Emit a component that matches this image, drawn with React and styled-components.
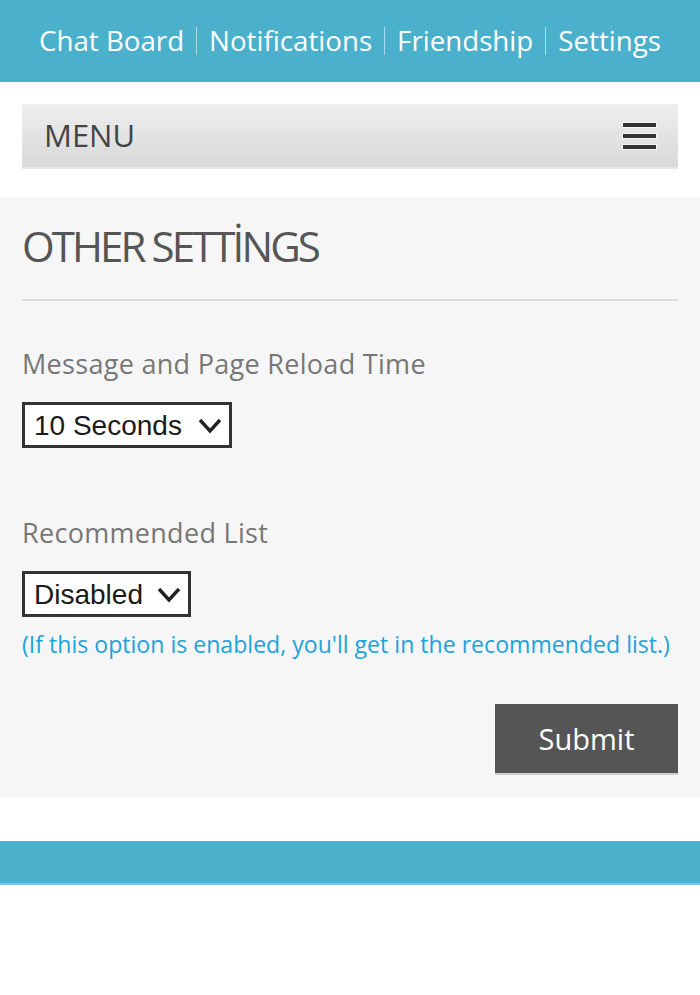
import React from "react";
import styled, { createGlobalStyle } from "styled-components";

const Global = createGlobalStyle`
  html, body { margin: 0; padding: 0; background: #ffffff; }
  body { font-family: "Open Sans", "Noto Sans", sans-serif; }
  * { box-sizing: border-box; }
`;

const TopBar = styled.header`
  height: 82px;
  background: #4bb0cb;
  display: flex;
  align-items: center;
  justify-content: center;
`;

const Nav = styled.nav`
  display: flex;
  align-items: center;
  gap: 12px;
`;

const NavLink = styled.a`
  color: #ffffff;
  font-size: 27.7px;
  letter-spacing: 0;
  text-decoration: none;
  line-height: 1;
`;

const NavSep = styled.span`
  width: 1px;
  height: 28px;
  background: #a9dcea;
`;

const MenuWrap = styled.div`
  padding: 22px 22px 29px;
`;

const MenuBar = styled.div`
  height: 65px;
  background: linear-gradient(#eeeeee, #d9d9d9);
  border-bottom: 2px solid #e9e9e9;
  display: flex;
  align-items: center;
  justify-content: space-between;
  padding: 0 22px;
`;

const MenuLabel = styled.span`
  font-size: 31px;
  color: #444444;
  line-height: 1;
`;

const Burger = styled.div`
  display: flex;
  flex-direction: column;
  gap: 7px;
`;

const BurgerLine = styled.span`
  display: block;
  width: 33px;
  height: 4px;
  background: #333333;
  box-shadow: 0 0 0 1px rgba(255, 255, 255, 0.6);
`;

const Panel = styled.main`
  background: #f6f6f6;
  padding: 22px 22px 22px;
`;

const Title = styled.h1`
  margin: 0;
  padding: 4px 0 31px;
  font-weight: 400;
  font-size: 42px;
  letter-spacing: -2.9px;
  line-height: 44px;
  color: #555555;
  border-bottom: 2px solid #dcdcdc;
`;

const Field = styled.div`
  display: flex;
  flex-direction: column;
  align-items: flex-start;
  margin-top: ${(p) => p.$top}px;
`;

const Label = styled.label`
  font-size: 27px;
  color: #777777;
  line-height: 34px;
  letter-spacing: 0.3px;
`;

const SelectWrap = styled.div`
  position: relative;
  margin-top: 21px;
`;

const Select = styled.select`
  appearance: none;
  -webkit-appearance: none;
  display: block;
  width: ${(p) => p.$w}px;
  height: 46px;
  border: 3px solid #333333;
  border-radius: 0;
  background: #ffffff;
  padding: 0 0 0 9px;
  font-family: "Liberation Sans", Arial, sans-serif;
  font-size: 28px;
  color: #1a1a1a;
  outline: none;
`;

const Chevron = styled.svg`
  position: absolute;
  right: 10px;
  top: 16px;
  pointer-events: none;
`;

const Note = styled.p`
  margin: 12px 0 0;
  font-size: 23.1px;
  line-height: 30px;
  letter-spacing: 0;
  white-space: nowrap;
  color: #1ba3dc;
`;

const Actions = styled.div`
  display: flex;
  justify-content: flex-end;
  margin-top: 45px;
`;

const SubmitButton = styled.button`
  width: 183px;
  height: 71px;
  background: #555555;
  border: none;
  border-bottom: 2px solid #cfcfcf;
  color: #ffffff;
  font-family: "Open Sans", sans-serif;
  font-size: 29px;
  padding: 0;
  cursor: pointer;
`;

const Footer = styled.footer`
  margin-top: 44px;
  height: 44px;
  background: #4bb0cb;
  border-bottom: 2px solid #7cc4d6;
`;

const ChevronIcon = () => (
  <Chevron width="24" height="16" viewBox="0 0 24 16">
    <path d="M2 2 L12 13 L22 2" fill="none" stroke="#222" strokeWidth="3.4" />
  </Chevron>
);

const SelectBox = ({ w, value }) => (
  <SelectWrap>
    <Select $w={w} defaultValue={value}>
      <option value={value}>{value}</option>
    </Select>
    <ChevronIcon />
  </SelectWrap>
);

export default function App() {
  return (
    <>
      <Global />
      <TopBar>
        <Nav>
          <NavLink href="#">Chat Board</NavLink>
          <NavSep />
          <NavLink href="#">Notifications</NavLink>
          <NavSep />
          <NavLink href="#">Friendship</NavLink>
          <NavSep />
          <NavLink href="#">Settings</NavLink>
        </Nav>
      </TopBar>
      <MenuWrap>
        <MenuBar>
          <MenuLabel>MENU</MenuLabel>
          <Burger>
            <BurgerLine />
            <BurgerLine />
            <BurgerLine />
          </Burger>
        </MenuBar>
      </MenuWrap>
      <Panel>
        <Title>OTHER SETTİNGS</Title>
        <Field $top={46}>
          <Label>Message and Page Reload Time</Label>
          <SelectBox w={210} value="10 Seconds" />
        </Field>
        <Field $top={68}>
          <Label>Recommended List</Label>
          <SelectBox w={169} value="Disabled" />
          <Note>(If this option is enabled, you'll get in the recommended list.)</Note>
        </Field>
        <Actions>
          <SubmitButton>Submit</SubmitButton>
        </Actions>
      </Panel>
      <Footer />
    </>
  );
}
